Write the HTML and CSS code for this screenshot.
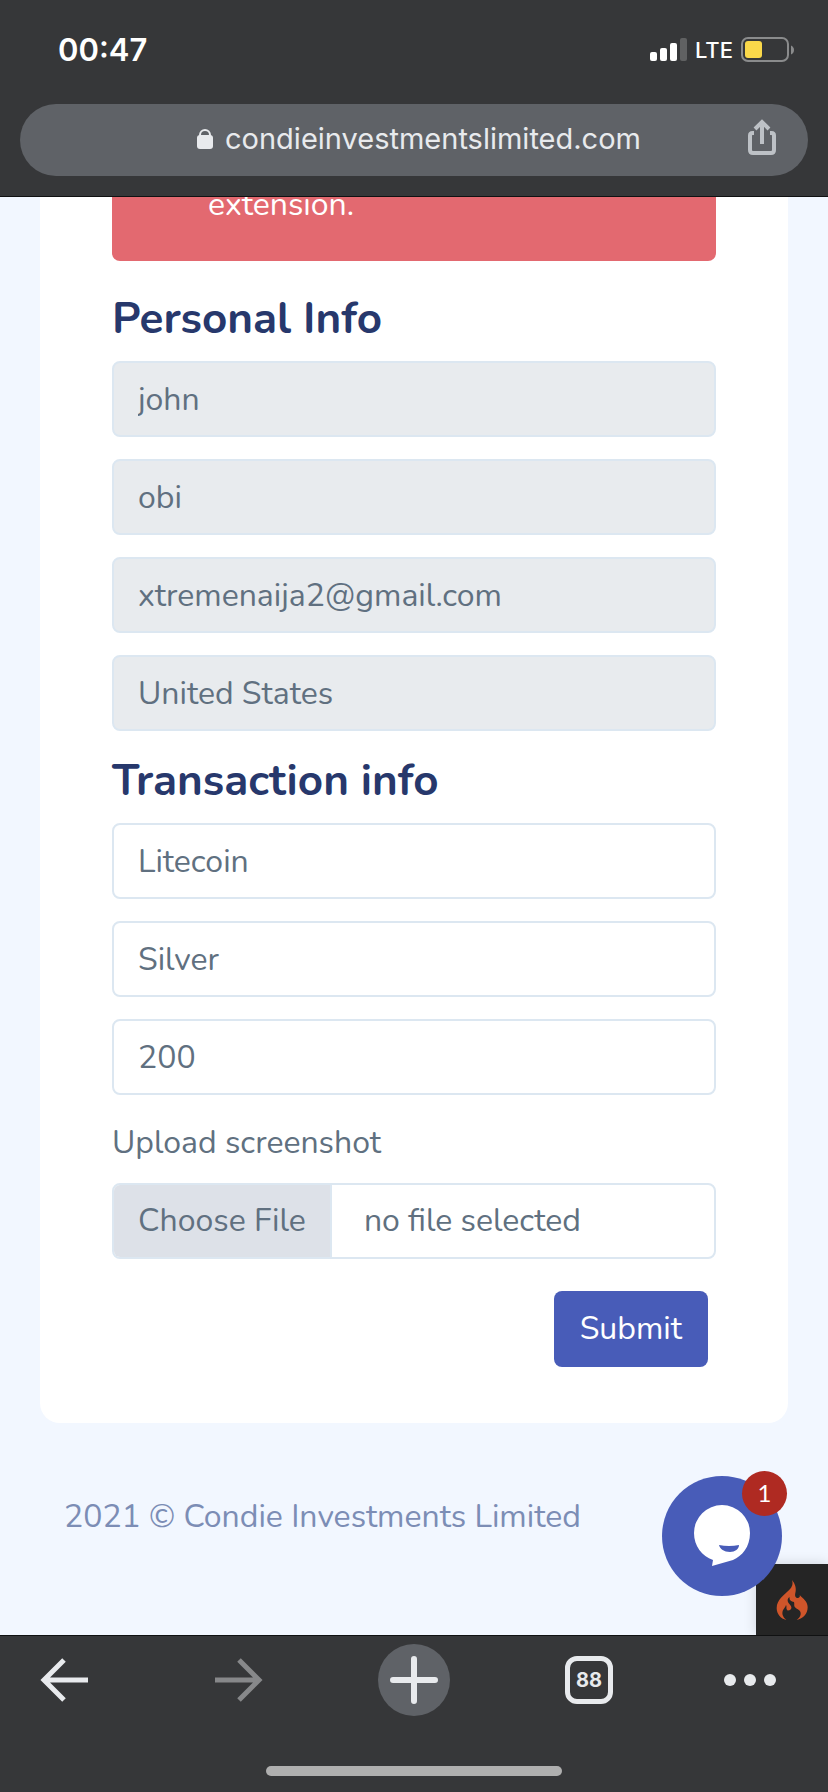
FILE: index.html
```html
<!DOCTYPE html>
<html lang="en">
<head>
<meta charset="utf-8">
<meta name="viewport" content="width=device-width">
<title>Condie Investments Limited</title>
<link rel="stylesheet" href="styles.css">
</head>
<body>
<header class="browser-top">
  <div class="status">
    <time class="clock">00:47</time>
    <div class="status-icons">
      <svg width="37" height="24" viewBox="0 0 37 24" fill="#fff" aria-hidden="true">
        <rect x="0" y="14" width="7" height="9" rx="2"/><rect x="10" y="10" width="7" height="13" rx="2"/><rect x="20" y="5" width="7" height="18" rx="2"/><rect x="30" y="0" width="7" height="23" rx="2" fill="#606162"/>
      </svg>
      <span class="network">LTE</span>
      <svg width="53" height="26" viewBox="0 0 53 26" aria-hidden="true">
        <rect x="1" y="1" width="46" height="23" rx="6" fill="none" stroke="#8a8b8c" stroke-width="2"/><rect x="4" y="4" width="17" height="17" rx="3" fill="#fad84a"/><path d="M50 8.500q3 1.500 3 4.500t-3 4.500z" fill="#8a8b8c"/>
      </svg>
    </div>
  </div>
  <div class="address">
    <button class="url" type="button">
      <svg width="16" height="21" viewBox="0 0 16 21" aria-hidden="true"><path d="M3 8V6a5 5 0 0 1 10 0v2" fill="none" stroke="#e8eaed" stroke-width="2"/><rect y="6" width="16" height="14" rx="3" fill="#e8eaed"/></svg>
      <span>condieinvestmentslimited.com</span>
    </button>
    <button class="share" type="button" aria-label="Share">
      <svg width="28" height="36" viewBox="0 0 28 36" fill="none" stroke="#bdc1c6" stroke-width="4"><path d="M6 14H4.500Q2 14 2 16.500V31q0 3 3 3h18q3 0 3-3V16.500Q26 14 23.500 14H22M14 25V3M7 10l7-7 7 7"/></svg>
    </button>
  </div>
</header>

<main class="page">
  <section class="card">
    <p class="alert">extension.</p>
    <form class="form">
      <h2 class="heading">Personal Info</h2>
      <div class="fields">
        <input class="field" type="text" value="john" aria-label="First name" readonly>
        <input class="field" type="text" value="obi" aria-label="Last name" readonly>
        <input class="field" type="email" value="xtremenaija2@gmail.com" aria-label="Email" readonly>
        <input class="field" type="text" value="United States" aria-label="Country" readonly>
      </div>
      <h2 class="heading">Transaction info</h2>
      <div class="fields">
        <input class="field" type="text" value="Litecoin" aria-label="Payment method">
        <input class="field" type="text" value="Silver" aria-label="Plan">
        <input class="field" type="text" value="200" aria-label="Amount">
      </div>
      <label class="upload-label" for="proof">Upload screenshot</label>
      <div class="file">
        <span class="file-button">Choose File</span>
        <span class="file-name">no file selected</span>
        <input class="file-input" id="proof" type="file">
      </div>
      <button class="submit" type="submit">Submit</button>
    </form>
  </section>
  <footer class="footer">2021 © Condie Investments Limited</footer>

  <button class="debug" type="button" aria-label="Debug toolbar">
    <svg width="32" height="40" viewBox="407 420 96 120" fill="#cf552a" aria-hidden="true"><path d="M455 420C459 433 455 441 447 449C431 465 409 479 409 504C409 522 421 536 438 540C430 533 424 525 427 513C429 506 436 502 437 495C440 499 437 503 439 508C442 514 451 512 453 505C456 495 440 490 442 479C443 475 445 473 448 472C446 481 453 485 461 486C463 492 460 498 464 502C470 508 483 511 481 523C480 531 475 536 469 540C489 536 502 521 502 502C502 484 489 477 478 465C480 470 477 474 472 474C465 474 463 467 465 459C469 444 464 431 455 420Z"/></svg>
  </button>
  <button class="chat" type="button" aria-label="Open chat">
    <svg width="56" height="62" viewBox="0 0 56 62" aria-hidden="true"><path d="M28 0a28 28 0 0 1 28 28c0 14-8 23-17 27L18 61l1-6C8 51 0 41 0 28A28 28 0 0 1 28 0z" fill="#fff"/><path d="M25 40q10 2 20 0c0 4-4 7-9 7-6 0-10-3-11-7z" fill="#485cb8"/></svg>
    <span class="badge">1</span>
  </button>
</main>

<nav class="browser-bottom">
  <div class="tools">
    <button class="tool" type="button" aria-label="Back"><svg width="48" height="44" viewBox="0 0 48 44" fill="none" stroke="#e8eaed" stroke-width="5"><path d="M48 22H5M24 2L4 22l20 20"/></svg></button>
    <button class="tool" type="button" aria-label="Forward"><svg width="48" height="44" viewBox="0 0 48 44" fill="none" stroke="#87888a" stroke-width="5"><path d="M0 22h43M24 2l20 20-20 20"/></svg></button>
    <button class="tool tool-new" type="button" aria-label="New tab"><svg width="48" height="48" viewBox="0 0 48 48" fill="none" stroke="#e8eaed" stroke-width="6" stroke-linecap="round"><path d="M24 3v42M3 24h42"/></svg></button>
    <button class="tool" type="button" aria-label="Tabs"><span class="tabs">88</span></button>
    <button class="tool tool-more" type="button" aria-label="More"><svg width="52" height="12" viewBox="0 0 52 12" fill="#e8eaed"><circle cx="6" cy="6" r="6"/><circle cx="26" cy="6" r="6"/><circle cx="46" cy="6" r="6"/></svg></button>
  </div>
  <div class="home-bar"></div>
</nav>
</body>
</html>
```
FILE: styles.css
```css
* { box-sizing: border-box; }

body {
  margin: 0;
  height: 100vh;
  display: flex;
  flex-direction: column;
  overflow: hidden;
  background: #f2f7ff;
  color: #607080;
  font-family: Nunito, Lato, sans-serif;
  font-size: 32px;
  line-height: 48px;
}

button {
  border: 0;
  padding: 0;
  background: none;
  color: inherit;
  font: inherit;
}

svg { display: block; flex: none; }

/* Browser chrome */
.browser-top {
  padding: 0 20px 20px;
  background: #363739;
  border-bottom: 1px solid #101112;
  font-family: Inter, sans-serif;
}

.status {
  display: flex;
  justify-content: space-between;
  align-items: center;
  height: 104px;
  padding: 0 14px 4px 38px;
}

.clock {
  color: #fff;
  font-size: 31px;
  font-weight: 600;
}

.status-icons {
  display: flex;
  align-items: center;
  gap: 8px;
}

.network {
  color: #fff;
  font-size: 22px;
  font-weight: 500;
}

.address {
  display: flex;
  align-items: center;
  height: 72px;
  padding: 0 32px 0 70px;
  border-radius: 36px;
  background: #5f6267;
}

.url {
  flex: 1;
  display: flex;
  justify-content: center;
  align-items: center;
  gap: 12px;
  padding-bottom: 2px;
  color: #e8eaed;
  font-size: 29px;
}

.share { padding-bottom: 6px; }

/* Page */
.page {
  position: relative;
  flex: 1;
  min-height: 0;
  overflow: hidden;
}

.card {
  margin: -16px 40px 0;
  padding: 0 72px 56px;
  border-radius: 0 0 20px 20px;
  background: #fff;
}

.alert {
  margin: 0 0 32px;
  padding: 0 96px 32px;
  border-radius: 8px;
  background: #e36970;
  color: #fff;
}

.form {
  display: flex;
  flex-direction: column;
}

.heading {
  margin: 0 0 16px;
  color: #27386c;
  font-size: 44px;
  font-weight: 700;
  line-height: 52px;
}

.fields {
  display: flex;
  flex-direction: column;
  gap: 22px;
  margin-bottom: 24px;
}

.field,
.file {
  width: 100%;
  height: 76px;
  border: 2px solid #dce7f1;
  border-radius: 8px;
  background: #fff;
  color: #607080;
}

.field {
  padding: 0 24px;
  font: inherit;
}

.field:read-only { background: #e8ebee; }

.upload-label { margin-bottom: 16px; }

.file {
  position: relative;
  display: flex;
  align-items: stretch;
  margin-bottom: 32px;
  overflow: hidden;
  line-height: 72px;
}

.file-button {
  padding: 0 24px;
  border-right: 2px solid #dce7f1;
  background: #dde1e8;
}

.file-name { padding-left: 32px; }

.file-input {
  position: absolute;
  inset: 0;
  width: 100%;
  opacity: 0;
}

.submit {
  align-self: flex-end;
  height: 76px;
  margin-right: 8px;
  padding: 0 26px;
  border-radius: 8px;
  background: #485cb8;
  color: #fff;
}

.footer {
  padding: 70px 64px;
  color: #7c8db5;
}

/* Floating widgets */
.debug {
  position: absolute;
  right: 0;
  bottom: 0;
  display: flex;
  justify-content: center;
  align-items: center;
  width: 72px;
  height: 71px;
  background: #252525;
  box-shadow: 0 0 12px rgba(0, 0, 0, .15);
}

.chat {
  position: absolute;
  right: 46px;
  bottom: 39px;
  display: flex;
  justify-content: center;
  align-items: center;
  width: 120px;
  height: 120px;
  border-radius: 50%;
  background: #485cb8;
}

.badge {
  position: absolute;
  top: -5px;
  right: -5px;
  width: 45px;
  height: 45px;
  border-radius: 50%;
  background: #af2a22;
  color: #fff;
  font-family: Lato, sans-serif;
  font-size: 24px;
  line-height: 44px;
}

/* Bottom toolbar */
.browser-bottom {
  padding: 8px 28px 16px;
  border-top: 1px solid #101112;
  background: #363739;
}

.tools {
  display: flex;
  justify-content: space-between;
  margin-bottom: 50px;
}

.tool {
  display: flex;
  justify-content: center;
  align-items: center;
  width: 72px;
  height: 72px;
}

.tool-new {
  border-radius: 50%;
  background: #5f6267;
}

.tool-more {
  justify-content: flex-end;
  padding-right: 24px;
}

.tabs {
  width: 48px;
  height: 48px;
  border: 5px solid #e8eaed;
  border-radius: 12px;
  color: #e8eaed;
  font-family: Inter, sans-serif;
  font-size: 20px;
  font-weight: 700;
  line-height: 38px;
}

.home-bar {
  width: 296px;
  height: 10px;
  margin: 0 auto;
  border-radius: 5px;
  background: #afafaf;
}
```
